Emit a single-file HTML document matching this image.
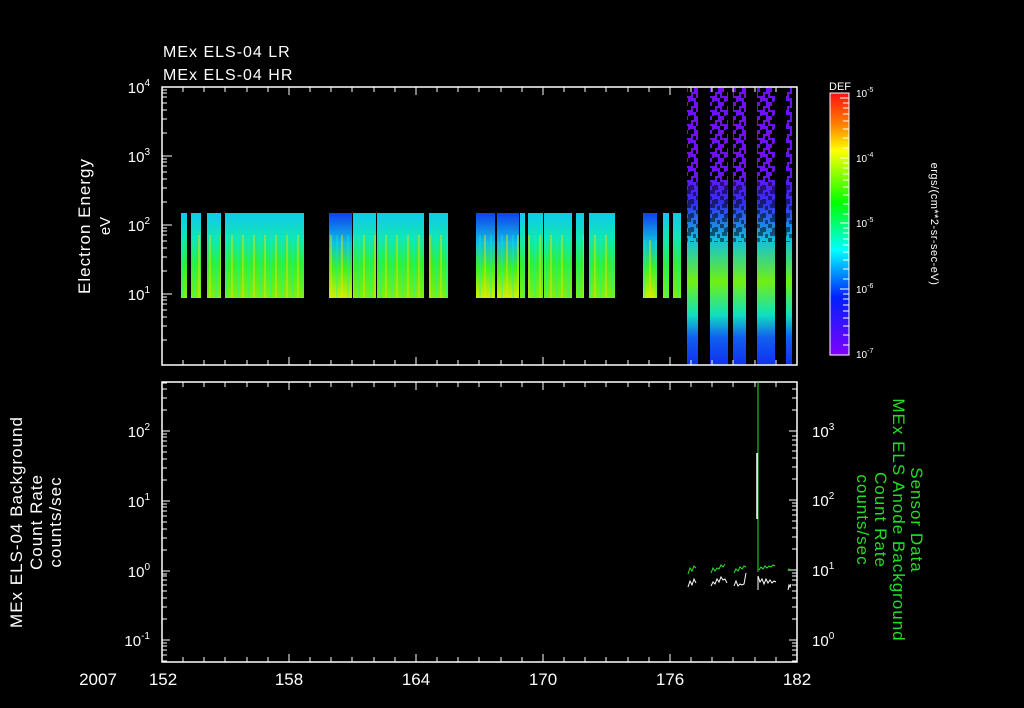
<!DOCTYPE html>
<html><head><meta charset="utf-8"><style>
html,body{margin:0;padding:0;background:#000;width:1024px;height:708px;overflow:hidden}
svg{display:block}
text{font-family:"Liberation Sans",sans-serif;fill:#fff}
</style></head><body>
<svg width="1024" height="708" viewBox="0 0 1024 708" xmlns="http://www.w3.org/2000/svg">
<defs>
<linearGradient id="lo" gradientUnits="userSpaceOnUse" x1="0" y1="213" x2="0" y2="298">
<stop offset="0" stop-color="#10c8f0"/><stop offset="0.3" stop-color="#10e8b0"/><stop offset="0.6" stop-color="#30f030"/><stop offset="1" stop-color="#80f010"/></linearGradient>
<linearGradient id="lo2" gradientUnits="userSpaceOnUse" x1="0" y1="213" x2="0" y2="298">
<stop offset="0" stop-color="#1040f0"/><stop offset="0.35" stop-color="#10c0e0"/><stop offset="0.65" stop-color="#40f020"/><stop offset="1" stop-color="#d0f000"/></linearGradient>
<pattern id="str" x="0" y="0" width="11" height="10" patternUnits="userSpaceOnUse">
<rect x="0" y="0" width="2" height="10" fill="#f0e000" opacity="0.45"/><rect x="6" y="0" width="2" height="10" fill="#00f0f0" opacity="0.3"/></pattern>
<linearGradient id="hi" gradientUnits="userSpaceOnUse" x1="0" y1="87" x2="0" y2="365">
<stop offset="0" stop-color="#7010f0"/><stop offset="0.3" stop-color="#7010f0"/><stop offset="0.42" stop-color="#3030f0"/><stop offset="0.55" stop-color="#10c0e0"/><stop offset="0.7" stop-color="#70f010"/><stop offset="0.82" stop-color="#10e0c0"/><stop offset="0.9" stop-color="#1060f0"/><stop offset="1" stop-color="#1030f0"/></linearGradient>
<pattern id="spk" x="0" y="0" width="12" height="14" patternUnits="userSpaceOnUse">
<rect x="0" y="0" width="4" height="4" fill="#000"/><rect x="6" y="3" width="4" height="5" fill="#000"/><rect x="2" y="8" width="5" height="4" fill="#000"/><rect x="9" y="10" width="3" height="4" fill="#000"/><rect x="4" y="4" width="2" height="4" fill="#000"/></pattern>
<linearGradient id="cb" x1="0" y1="0" x2="0" y2="1">
<stop offset="0" stop-color="#ff1010"/><stop offset="0.12" stop-color="#ff8000"/><stop offset="0.22" stop-color="#ffff00"/><stop offset="0.42" stop-color="#00ff00"/><stop offset="0.6" stop-color="#00ffff"/><stop offset="0.78" stop-color="#0020ff"/><stop offset="1" stop-color="#8000ff"/></linearGradient>
</defs>

<text x="163" y="57" font-size="16" letter-spacing="1">MEx ELS-04 LR</text>
<text x="163" y="80" font-size="16" letter-spacing="1">MEx ELS-04 HR</text>

<!-- low-res blocks -->
<g>
<rect x="181" y="213" width="6" height="85" fill="url(#lo)"/>
<rect x="191" y="213" width="10" height="85" fill="url(#lo)"/>
<rect x="207" y="213" width="14" height="85" fill="url(#lo)"/>
<rect x="225" y="213" width="79" height="85" fill="url(#lo)"/>
<rect x="329" y="213" width="23" height="85" fill="url(#lo2)"/>
<rect x="353" y="213" width="23" height="85" fill="url(#lo)"/>
<rect x="377" y="213" width="47" height="85" fill="url(#lo)"/>
<rect x="429" y="213" width="19" height="85" fill="url(#lo)"/>
<rect x="476" y="213" width="19" height="85" fill="url(#lo2)"/>
<rect x="497" y="213" width="22" height="85" fill="url(#lo2)"/>
<rect x="520" y="213" width="5" height="85" fill="url(#lo)"/>
<rect x="528" y="213" width="15" height="85" fill="url(#lo)"/>
<rect x="544" y="213" width="28" height="85" fill="url(#lo)"/>
<rect x="576" y="213" width="8" height="85" fill="url(#lo)"/>
<rect x="589" y="213" width="26" height="85" fill="url(#lo)"/>
<rect x="643" y="213" width="14" height="85" fill="url(#lo2)"/>
<rect x="663" y="213" width="6" height="85" fill="url(#lo)"/>
<rect x="673" y="213" width="8" height="85" fill="url(#lo)"/>
</g>
<g fill="url(#str)">
<rect x="181" y="235" width="123" height="63"/><rect x="329" y="235" width="120" height="63"/><rect x="476" y="235" width="140" height="63"/><rect x="643" y="240" width="38" height="58"/>
</g>
<g fill="#000">
<rect x="187" y="213" width="4" height="85"/><rect x="201" y="213" width="6" height="85"/><rect x="221" y="213" width="4" height="85"/>
<rect x="304" y="213" width="25" height="85"/><rect x="352" y="213" width="1" height="85"/><rect x="376" y="213" width="1" height="85"/><rect x="424" y="213" width="5" height="85"/><rect x="448" y="213" width="28" height="85"/>
<rect x="495" y="213" width="2" height="85"/><rect x="519" y="213" width="1" height="85"/><rect x="525" y="213" width="3" height="85"/><rect x="543" y="213" width="1" height="85"/><rect x="572" y="213" width="4" height="85"/><rect x="584" y="213" width="5" height="85"/><rect x="615" y="213" width="28" height="85"/>
<rect x="657" y="213" width="6" height="85"/><rect x="669" y="213" width="4" height="85"/>
</g>
<!-- high-alt columns -->
<g fill="url(#hi)">
<rect x="687" y="87" width="11" height="278"/>
<rect x="710" y="87" width="18" height="278"/>
<rect x="733" y="87" width="13" height="278"/>
<rect x="757" y="87" width="18" height="278"/>
<rect x="786" y="87" width="6" height="278"/>
</g>
<g fill="url(#spk)">
<rect x="687" y="87" width="105" height="95"/>
</g>
<g fill="url(#spk)" opacity="0.5">
<rect x="687" y="182" width="105" height="60"/>
</g>

<!-- top panel frame -->
<rect x="162" y="87" width="635" height="278" fill="none" stroke="#fff" stroke-width="1.5"/>
<g stroke="#fff" stroke-width="1">
<path d="M162 156h10M162 225h10M162 294h10M162 133h5M162 119h5M162 110h5M162 103h5M162 97h5M162 93h5M162 90h5M162 202h5M162 188h5M162 179h5M162 172h5M162 166h5M162 162h5M162 159h5M162 271h5M162 257h5M162 248h5M162 241h5M162 235h5M162 231h5M162 228h5M162 340h5M162 326h5M162 317h5M162 310h5M162 304h5M162 300h5M162 297h5"/>
<path d="M183 87v5M204 87v5M225 87v5M247 87v5M268 87v5M289 87v8M310 87v5M331 87v5M352 87v5M374 87v5M395 87v5M416 87v8M437 87v5M458 87v5M479 87v5M501 87v5M522 87v5M543 87v8M564 87v5M585 87v5M606 87v5M628 87v5M649 87v5M670 87v8M691 87v5M712 87v5M733 87v5M755 87v5M776 87v5"/>
<path d="M183 365v-5M204 365v-5M225 365v-5M247 365v-5M268 365v-5M289 365v-8M310 365v-5M331 365v-5M352 365v-5M374 365v-5M395 365v-5M416 365v-8M437 365v-5M458 365v-5M479 365v-5M501 365v-5M522 365v-5M543 365v-8M564 365v-5M585 365v-5M606 365v-5M628 365v-5M649 365v-5M670 365v-8M691 365v-5M712 365v-5M733 365v-5M755 365v-5M776 365v-5"/>
</g>
<g font-size="15" text-anchor="end">
<text x="150" y="93">10<tspan font-size="10" dy="-7">4</tspan></text>
<text x="150" y="162">10<tspan font-size="10" dy="-7">3</tspan></text>
<text x="150" y="231">10<tspan font-size="10" dy="-7">2</tspan></text>
<text x="150" y="300">10<tspan font-size="10" dy="-7">1</tspan></text>
</g>
<text transform="translate(90 226) rotate(-90)" font-size="17" text-anchor="middle" letter-spacing="1">Electron Energy</text>
<text transform="translate(110 226) rotate(-90)" font-size="15" text-anchor="middle">eV</text>

<!-- colorbar -->
<text x="829" y="90" font-size="11">DEF</text>
<rect x="830" y="93" width="19" height="262" fill="url(#cb)" stroke="#fff" stroke-width="1"/>
<g stroke="#fff" stroke-width="1">
<path d="M849 158h-9M849 223h-9M849 289h-9M840 98h9M843 103h6M843 108h6M843 114h6M843 121h6M843 129h6M843 138h6M843 148h6M843 163h6M843 168h6M843 174h6M843 180h6M843 187h6M843 195h6M843 204h6M843 214h6M843 228h6M843 233h6M843 239h6M843 245h6M843 252h6M843 260h6M843 269h6M843 279h6M843 294h6M843 299h6M843 305h6M843 311h6M843 318h6M843 326h6M843 335h6M843 345h6"/>
</g>
<g font-size="10">
<text x="856" y="97">10<tspan font-size="7" dy="-5">-5</tspan></text>
<text x="856" y="162">10<tspan font-size="7" dy="-5">-4</tspan></text>
<text x="856" y="227">10<tspan font-size="7" dy="-5">-5</tspan></text>
<text x="856" y="293">10<tspan font-size="7" dy="-5">-6</tspan></text>
<text x="856" y="358">10<tspan font-size="7" dy="-5">-7</tspan></text>
</g>
<text transform="translate(931 224) rotate(90)" font-size="11" text-anchor="middle" letter-spacing="0.5">ergs/(cm**2-sr-sec-eV)</text>

<!-- bottom panel -->
<rect x="162" y="382" width="635" height="280" fill="none" stroke="#fff" stroke-width="1.5"/>
<g stroke="#fff" stroke-width="1">
<path d="M162 431h8M162 501h8M162 571h8M162 640h8M162 410h5M162 398h5M162 389h5M162 383h5M162 480h5M162 468h5M162 459h5M162 452h5M162 446h5M162 441h5M162 437h5M162 434h5M162 550h5M162 538h5M162 529h5M162 522h5M162 516h5M162 511h5M162 507h5M162 504h5M162 619h5M162 607h5M162 598h5M162 591h5M162 585h5M162 580h5M162 576h5M162 574h5M162 661h5M162 655h5M162 650h5M162 646h5M162 643h5"/>
<path d="M797 431h-8M797 500h-8M797 570h-8M797 640h-8M797 410h-5M797 398h-5M797 389h-5M797 479h-5M797 467h-5M797 458h-5M797 451h-5M797 445h-5M797 440h-5M797 436h-5M797 549h-5M797 537h-5M797 528h-5M797 521h-5M797 515h-5M797 510h-5M797 506h-5M797 503h-5M797 619h-5M797 607h-5M797 598h-5M797 591h-5M797 585h-5M797 580h-5M797 576h-5M797 573h-5M797 661h-5M797 655h-5M797 650h-5M797 646h-5M797 643h-5"/>
<path d="M183 382v5M204 382v5M225 382v5M247 382v5M268 382v5M289 382v8M310 382v5M331 382v5M352 382v5M374 382v5M395 382v5M416 382v8M437 382v5M458 382v5M479 382v5M501 382v5M522 382v5M543 382v8M564 382v5M585 382v5M606 382v5M628 382v5M649 382v5M670 382v8M691 382v5M712 382v5M733 382v5M755 382v5M776 382v5"/>
<path d="M183 662v-5M204 662v-5M225 662v-5M247 662v-5M268 662v-5M289 662v-8M310 662v-5M331 662v-5M352 662v-5M374 662v-5M395 662v-5M416 662v-8M437 662v-5M458 662v-5M479 662v-5M501 662v-5M522 662v-5M543 662v-8M564 662v-5M585 662v-5M606 662v-5M628 662v-5M649 662v-5M670 662v-8M691 662v-5M712 662v-5M733 662v-5M755 662v-5M776 662v-5"/>
</g>
<!-- traces -->
<g fill="none" stroke-width="1">
<path stroke="#30e030" d="M688 574l2-6 2 3 2-5 2 2M711 573l2-5 2 3 2-3 2 1 2-4 2 2 2-3M734 573l2-4 2 2 2-4 2 2 2-3 2 1M759 570l2-3 2 2 2-3 2 2 2-2 2 1 2-2 2 1M788 571l1-2 1 1"/>
<path stroke="#fff" d="M688 587l2-6 2 4 2-6 2 4M711 586l2-4 2 2 2-5 2 3 2-5 2 3 2-1 2 4M734 586l2-5 2 5 2-2 2 1 2-1 2-11M758 590v-14l2 6 2-3 2 5 2-5 2 4 2-3 2 3 2-2 2 1M788 590l1-5 1 2 1-3"/>
<path stroke="#30e030" d="M758 382V572"/>
<path stroke="#fff" stroke-width="1.5" d="M757 453V519"/>
</g>
<g font-size="15" text-anchor="end">
<text x="150" y="437">10<tspan font-size="10" dy="-7">2</tspan></text>
<text x="150" y="507">10<tspan font-size="10" dy="-7">1</tspan></text>
<text x="150" y="577">10<tspan font-size="10" dy="-7">0</tspan></text>
<text x="150" y="646">10<tspan font-size="10" dy="-7">-1</tspan></text>
</g>
<g font-size="15">
<text x="812" y="437">10<tspan font-size="10" dy="-7">3</tspan></text>
<text x="812" y="506">10<tspan font-size="10" dy="-7">2</tspan></text>
<text x="812" y="576">10<tspan font-size="10" dy="-7">1</tspan></text>
<text x="812" y="646">10<tspan font-size="10" dy="-7">0</tspan></text>
</g>
<g font-size="17" text-anchor="middle" letter-spacing="1">
<text transform="translate(22 522) rotate(-90)">MEx ELS-04 Background</text>
<text transform="translate(42 522) rotate(-90)">Count Rate</text>
<text transform="translate(61 522) rotate(-90)">counts/sec</text>
</g>
<g font-size="17" text-anchor="middle" letter-spacing="1" style="fill:#20e020">
<text transform="translate(911 520) rotate(90)" style="fill:#20e020">Sensor Data</text>
<text transform="translate(893 520) rotate(90)" style="fill:#20e020">MEx ELS Anode Background</text>
<text transform="translate(875 520) rotate(90)" style="fill:#20e020">Count Rate</text>
<text transform="translate(857 520) rotate(90)" style="fill:#20e020">counts/sec</text>
</g>

<g font-size="17" text-anchor="middle">
<text x="98" y="685">2007</text>
<text x="163" y="685">152</text>
<text x="289" y="685">158</text>
<text x="416" y="685">164</text>
<text x="543" y="685">170</text>
<text x="670" y="685">176</text>
<text x="797" y="685">182</text>
</g>
</svg>
</body></html>
